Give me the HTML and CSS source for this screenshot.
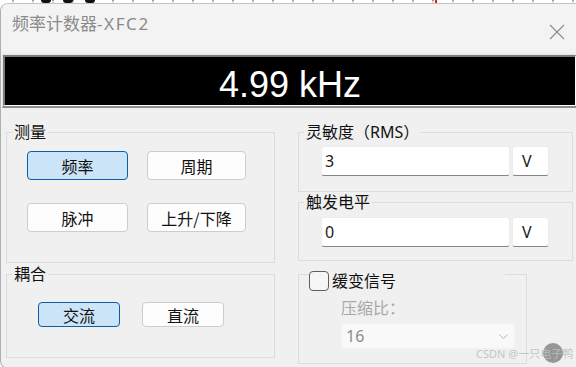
FILE: index.html
```html
<!DOCTYPE html>
<html lang="zh-CN">
<head>
    <meta charset="UTF-8">
    <meta name="viewport" content="width=device-width, initial-scale=1.0">
    <title>频率计数器-XFC2</title>
    <link rel="stylesheet" href="styles.css">
</head>
<body>
    <div class="top-strip">
        <span class="blob"></span>
        <span class="blob"></span>
        <span class="blob"></span>
        <span class="marker"></span>
    </div>

    <div class="window">
        <div class="titlebar">
            <div class="title">频率计数器<span class="title-suffix">-XFC2</span></div>
            <svg class="close" viewBox="0 0 16 16" fill="none" stroke="#8a8a8a" stroke-width="1.1">
                <path d="M1 1L15 15M15 1L1 15" />
            </svg>
        </div>

        <div class="display">
            <div class="screen">4.99 kHz</div>
        </div>

        <div class="panel">
            <div class="column">
                <fieldset class="group group-measure">
                    <legend>测量</legend>
                    <div class="btn-grid">
                        <button class="btn active">频率</button>
                        <button class="btn">周期</button>
                        <button class="btn">脉冲</button>
                        <button class="btn">上升/下降</button>
                    </div>
                </fieldset>

                <fieldset class="group group-couple">
                    <legend>耦合</legend>
                    <div class="btn-row">
                        <button class="btn small active">交流</button>
                        <button class="btn small">直流</button>
                    </div>
                </fieldset>
            </div>

            <div class="column">
                <fieldset class="group group-sens">
                    <legend>灵敏度（RMS）</legend>
                    <div class="field">
                        <div class="input">3</div>
                        <div class="unit">V</div>
                    </div>
                </fieldset>

                <fieldset class="group group-trig">
                    <legend>触发电平</legend>
                    <div class="field">
                        <div class="input">0</div>
                        <div class="unit">V</div>
                    </div>
                </fieldset>

                <fieldset class="group group-slow">
                    <legend class="check-legend">
                        <div class="check-row">
                            <span class="checkbox"></span>
                            <span>缓变信号</span>
                        </div>
                    </legend>
                    <div class="muted-label">压缩比：</div>
                    <div class="select">
                        <span>16</span>
                        <svg class="chevron" viewBox="0 0 9 5" fill="none" stroke="#b4b4b4" stroke-width="1">
                            <path d="M0.5 0.5L4.5 4.5L8.5 0.5" />
                        </svg>
                    </div>
                </fieldset>
            </div>
        </div>
    </div>

    <div class="watermark">
        <span class="bubble"></span>
        <span class="watermark-text">CSDN @一只电子鸭</span>
    </div>
</body>
</html>
```

FILE: styles.css
```css
* {
    margin: 0;
    padding: 0;
    box-sizing: border-box;
}

body {
    width: 576px;
    height: 367px;
    overflow: hidden;
    background: #ffffff;
    font-family: "Noto Sans", "Noto Sans CJK SC", sans-serif;
    font-size: 16px;
    color: #1a1a1a;
    position: relative;
}

/* strip of the canvas behind the dialog */
.top-strip {
    height: 3px;
    display: flex;
    padding-left: 41px;
    gap: 12px;
    background-image: radial-gradient(circle, #9a9a9a 0.8px, transparent 1.3px);
    background-size: 20px 3px;
    background-position: 3px -1px;
}

.blob {
    width: 10px;
    height: 3px;
    background: #111;
    border-radius: 0 0 5px 5px;
}

.marker {
    width: 2px;
    height: 3px;
    background: #e21b1b;
    margin-left: 328px;
}

.window {
    width: 600px;
    height: 366px;
    background: #f0f0f0;
    border-left: 1px solid #b0b0b0;
    border-top: 1px solid #c4c4c4;
    border-bottom: 1px solid #b0b0b0;
    border-radius: 8px 0 0 8px;
    overflow: hidden;
}

.titlebar {
    width: 575px;
    height: 48px;
    background: #f3f3f3;
    display: flex;
    justify-content: space-between;
    align-items: flex-start;
    padding: 8px 11px 0 11px;
}

.title {
    font-size: 17px;
    line-height: 24px;
    color: #8a8a8a;
}

.title-suffix {
    letter-spacing: 1.6px;
}

.close {
    width: 16px;
    height: 16px;
    margin-top: 12px;
}

.display {
    margin: 2px 0 0 1px;
    width: 574px;
    border-top: 1px solid #e6e6e6;
    border-left: 1px solid #e6e6e6;
    border-bottom: 2px solid #8c8c8c;
}

.screen {
    height: 51px;
    background: #000;
    border-top: 2px solid #7c7c7c;
    border-left: 2px solid #7c7c7c;
    border-right: 1px solid #fff;
    border-bottom: 1px solid #fff;
    color: #fff;
    font-family: "Liberation Sans", Arial, sans-serif;
    font-size: 36px;
    line-height: 36px;
    padding-top: 10px;
    text-align: center;
}

.panel {
    display: grid;
    grid-template-columns: 269px 275px;
    column-gap: 23px;
    padding: 14px 0 0 5px;
}

.column {
    display: flex;
    flex-direction: column;
    align-items: flex-start;
}

.group {
    border: 1px solid #dcdcdc;
    margin: 0;
    padding: 0;
    min-width: 0;
    width: 100%;
}

.group legend {
    margin-left: 5px;
    padding: 0 2px;
    font-size: 16px;
    line-height: 20px;
    color: #111;
}

.group-measure { height: 141px; }
.group-couple { height: 94px; margin-top: 1px; }
.group-sens { height: 70px; }
.group-trig { height: 69px; }
.group-slow { height: 93px; width: 229px; margin-top: 10px; }

.btn {
    font-family: "Noto Sans CJK SC", "Noto Sans", sans-serif;
    font-size: 16px;
    color: #111;
    background: #fdfdfd;
    border: 1px solid #cdcdcd;
    border-radius: 4px;
    height: 29px;
    line-height: 1;
}

.btn.active {
    background: #cce4f7;
    border-color: #0b5ea6;
}

.btn-grid {
    display: grid;
    grid-template-columns: 101px 99px;
    column-gap: 19px;
    row-gap: 23px;
    margin-top: 9px;
    padding-left: 20px;
}

.btn-row {
    display: flex;
    gap: 22px;
    margin-top: 18px;
    padding-left: 31px;
}

.btn.small {
    width: 82px;
    height: 25px;
}

.field {
    display: flex;
    gap: 2px;
    margin-top: 4px;
    padding-left: 22px;
}

.group-trig .field {
    margin-top: 5px;
}

.input,
.unit {
    height: 30px;
    background: #fff;
    border: 1px solid #ececec;
    border-bottom-color: #868686;
    border-radius: 3px;
    line-height: 28px;
    color: #1b1b1b;
}

.input {
    width: 189px;
    padding-left: 3px;
}

.unit {
    width: 37px;
    padding-left: 9px;
}

.check-legend {
    margin-left: 10px !important;
    padding: 0 !important;
    width: 196px;
    height: 6px;
}

.check-row {
    display: flex;
    align-items: center;
    gap: 3px;
    height: 20px;
}

.checkbox {
    width: 20px;
    height: 20px;
    border: 1px solid #5e5e5e;
    border-radius: 4px;
    background: #f6f6f6;
}

.muted-label {
    margin-top: 21px;
    padding-left: 42px;
    line-height: 20px;
    color: #a8a8a8;
}

.select {
    margin: 5px 0 0 42px;
    width: 174px;
    height: 26px;
    background: #f9f9f9;
    border: 1px solid #f2f2f2;
    border-radius: 3px;
    display: flex;
    align-items: center;
    justify-content: space-between;
    padding: 0 6px 0 4px;
    color: #8c8c8c;
}

.chevron {
    width: 9px;
    height: 5px;
}

/* page watermark over the dialog corner */
.watermark {
    position: absolute;
    left: 476px;
    top: 343px;
    width: 98px;
    height: 20px;
}

.bubble {
    position: absolute;
    left: 67px;
    top: 0;
    width: 20px;
    height: 20px;
    border-radius: 50%;
    background: rgba(120, 120, 120, 0.75);
}

.watermark-text {
    position: absolute;
    left: 0;
    top: 4px;
    font-size: 11px;
    line-height: 13px;
    white-space: nowrap;
    color: rgba(190, 190, 190, 0.9);
}
```
